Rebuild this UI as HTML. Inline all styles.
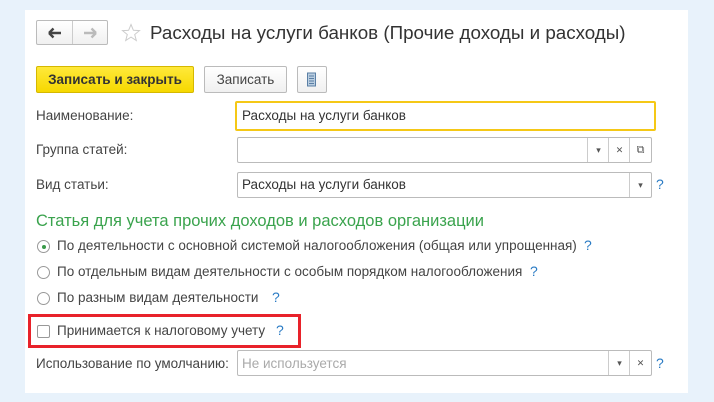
<!DOCTYPE html>
<html><head><meta charset="utf-8"><style>
body{margin:0;width:714px;height:402px;background:#e8f2fb;font-family:"Liberation Sans",Arial,sans-serif;position:relative;overflow:hidden;color:#444}
.a{position:absolute}
.panel{left:25px;top:10px;width:663px;height:383px;background:#fff}
.t{font-size:13.5px;white-space:nowrap}
.fld{position:absolute;border:1px solid #bbb;border-radius:2px;background:#fff;box-sizing:border-box}
.btn{position:absolute;border:1px solid #bbb;border-radius:2px;background:linear-gradient(#fff,#f0f0f0);box-sizing:border-box;font-size:13.5px;text-align:center}
.q{color:#2a7bc4;font-size:14px;position:absolute}
.rad{position:absolute;width:13px;height:13px;border:1px solid #999;border-radius:50%;box-sizing:border-box;background:#fff}
.sb{position:absolute;top:0;bottom:0;width:21px;border-left:1px solid #ccc;font-size:9px;text-align:center;color:#555}
</style></head><body>
<div class="a panel"></div>
<div class="btn" style="left:36px;top:20px;width:72px;height:25px"></div>
<div class="a" style="left:72px;top:21px;width:1px;height:23px;background:#ccc"></div>
<svg class="a" style="left:46px;top:25px" width="18" height="16"><path d="M3 8H15M3 8L7.5 3.5M3 8L7.5 12.5" stroke="#444" stroke-width="2.4" fill="none"/></svg>
<svg class="a" style="left:81px;top:25px" width="18" height="16"><path d="M3 8H15M15 8L10.5 3.5M15 8L10.5 12.5" stroke="#bbb" stroke-width="2.4" fill="none"/></svg>
<svg class="a" style="left:121px;top:23px" width="20" height="20"><path d="M10 1.5L12.4 7.3 18.5 7.6 13.7 11.5 15.3 17.5 10 14.1 4.7 17.5 6.3 11.5 1.5 7.6 7.6 7.3Z" fill="none" stroke="#ccc" stroke-width="1"/></svg>
<div class="a" style="left:150px;top:22px;font-size:18.8px;color:#333;white-space:nowrap">Расходы на услуги банков (Прочие доходы и расходы)</div>
<div class="btn" style="left:36px;top:66px;width:158px;height:27px;background:linear-gradient(#ffe93a,#f6d800);border-color:#d5b800;font-weight:bold;color:#333;line-height:25px">Записать и закрыть</div>
<div class="btn" style="left:204px;top:66px;width:83px;height:27px;line-height:25px;color:#444">Записать</div>
<div class="btn" style="left:297px;top:66px;width:30px;height:27px"></div>
<svg class="a" style="left:306px;top:72px" width="12" height="16"><rect x="1.5" y="1" width="8" height="13" fill="#b9cde0" stroke="#5a7fa5"/><path d="M3 4H8M3 6.5H8M3 9H8M3 11.5H8" stroke="#5a7fa5"/></svg>
<div class="a t" style="left:36px;top:108px">Наименование:</div>
<div class="fld" style="left:235px;top:101px;width:421px;height:30px;border:2px solid #f5c816"></div>
<div class="a t" style="left:242px;top:108px;color:#333">Расходы на услуги банков</div>
<div class="a t" style="left:36px;top:142px">Группа статей:</div>
<div class="fld" style="left:237px;top:137px;width:415px;height:26px"><div class="sb" style="right:42px;line-height:24px">&#9662;</div><div class="sb" style="right:21px;line-height:24px">&#10005;</div><div class="sb" style="right:0;line-height:24px;font-size:11px">&#10697;</div></div>
<div class="a t" style="left:36px;top:177px">Вид статьи:</div>
<div class="fld" style="left:237px;top:172px;width:415px;height:26px"><div class="sb" style="right:0;line-height:24px">&#9662;</div></div>
<div class="a t" style="left:242px;top:177px;color:#333">Расходы на услуги банков</div>
<div class="q" style="left:656px;top:176px">?</div>
<div class="a" style="left:36px;top:212px;font-size:16.5px;color:#3aa34d;white-space:nowrap">Статья для учета прочих доходов и расходов организации</div>
<div class="rad" style="left:37px;top:240px"><div style="position:absolute;left:3.5px;top:3.5px;width:4px;height:4px;border-radius:50%;background:#3a9a4a"></div></div>
<div class="a t" style="left:57px;top:238px">По деятельности с основной системой налогообложения (общая или упрощенная)</div>
<div class="q" style="left:584px;top:237px">?</div>
<div class="rad" style="left:37px;top:266px"></div>
<div class="a t" style="left:57px;top:264px">По отдельным видам деятельности с особым порядком налогообложения</div>
<div class="q" style="left:530px;top:263px">?</div>
<div class="rad" style="left:37px;top:292px"></div>
<div class="a t" style="left:57px;top:290px">По разным видам деятельности</div>
<div class="q" style="left:272px;top:289px">?</div>
<div class="a" style="left:28px;top:314px;width:267px;height:28px;border:3px solid #e8222a"></div>
<div class="a" style="left:37px;top:325px;width:13px;height:13px;border:1px solid #999;border-radius:2px;box-sizing:border-box"></div>
<div class="a t" style="left:57px;top:323px">Принимается к налоговому учету</div>
<div class="q" style="left:276px;top:322px">?</div>
<div class="a t" style="left:36px;top:356px">Использование по умолчанию:</div>
<div class="fld" style="left:237px;top:350px;width:415px;height:26px"><div class="sb" style="right:21px;line-height:24px">&#9662;</div><div class="sb" style="right:0;line-height:24px">&#10005;</div></div>
<div class="a t" style="left:242px;top:356px;color:#aaa">Не используется</div>
<div class="q" style="left:656px;top:355px">?</div>
</body></html>
